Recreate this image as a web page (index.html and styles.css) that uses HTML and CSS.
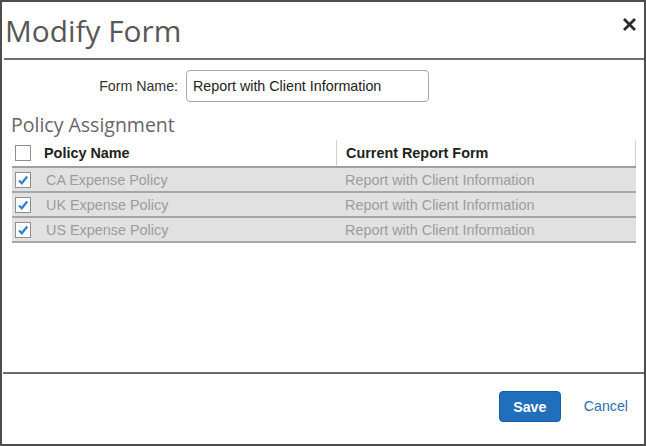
FILE: index.html
```html
<!DOCTYPE html>
<html>
<head>
<meta charset="utf-8">
<link rel="stylesheet" href="styles.css">
</head>
<body>
<div class="dialog">
  <header class="dlg-head">
    <h1 class="dlg-title">Modify Form</h1>
    <button class="close" aria-label="Close">
      <svg width="13" height="13" viewBox="0 0 13 13"><path d="M2 2 L11 11 M11 2 L2 11" stroke="#2b2b2b" stroke-width="2.8" stroke-linecap="square"/></svg>
    </button>
  </header>
  <div class="dlg-body">
    <div class="form-row">
      <label class="form-label">Form Name:</label>
      <input class="form-input" type="text" value="Report with Client Information">
    </div>
    <h2 class="section-title">Policy Assignment</h2>
    <div class="ptable">
      <div class="prow phead">
        <div class="pcell pc1"><span class="cbox"></span><span>Policy Name</span></div>
        <div class="pcell pc2">Current Report Form</div>
      </div>
      <div class="prow">
        <div class="pcell pc1"><span class="cbox checked"><svg width="12" height="12" viewBox="0 0 12 12"><path d="M2 6.5 L4.8 9.3 L10.2 2.5" fill="none" stroke="#2f7fd8" stroke-width="2.2"/></svg></span><span>CA Expense Policy</span></div>
        <div class="pcell pc2">Report with Client Information</div>
      </div>
      <div class="prow">
        <div class="pcell pc1"><span class="cbox checked"><svg width="12" height="12" viewBox="0 0 12 12"><path d="M2 6.5 L4.8 9.3 L10.2 2.5" fill="none" stroke="#2f7fd8" stroke-width="2.2"/></svg></span><span>UK Expense Policy</span></div>
        <div class="pcell pc2">Report with Client Information</div>
      </div>
      <div class="prow">
        <div class="pcell pc1"><span class="cbox checked"><svg width="12" height="12" viewBox="0 0 12 12"><path d="M2 6.5 L4.8 9.3 L10.2 2.5" fill="none" stroke="#2f7fd8" stroke-width="2.2"/></svg></span><span>US Expense Policy</span></div>
        <div class="pcell pc2">Report with Client Information</div>
      </div>
    </div>
  </div>
  <footer class="dlg-foot">
    <button class="btn-save">Save</button>
    <a class="btn-cancel" href="#">Cancel</a>
  </footer>
</div>
</body>
</html>
```
FILE: styles.css
```css
* { box-sizing: border-box; }
html, body { margin: 0; padding: 0; background: #fff; }
body { font-family: "Liberation Sans", Arial, sans-serif; }

.dialog {
  width: 646px;
  height: 446px;
  border: 2px solid #4d4d4d;
  display: flex;
  flex-direction: column;
  background: #fff;
}

.dlg-head {
  height: 58px;
  margin-left: 2px;
  border-bottom: 2px solid #6f6f6f;
  display: flex;
  justify-content: space-between;
  align-items: flex-start;
  flex-shrink: 0;
}
.dlg-title {
  margin: 0;
  padding: 11px 0 0 1px;
  font-family: "Open Sans", sans-serif;
  font-weight: 400;
  font-size: 29.8px;
  line-height: 36px;
  color: #575757;
}
.close {
  margin: 16px 8px 0 0;
  padding: 0;
  border: 0;
  background: none;
  width: 13px;
  height: 13px;
  display: flex;
}

.dlg-body {
  flex: 1;
  padding: 0 8px 0 10px;
}

.form-row {
  margin-top: 10px;
  display: flex;
  align-items: center;
}
.form-label {
  width: 166px;
  text-align: right;
  font-size: 14.2px;
  color: #333;
  margin-right: 8px;
}
.form-input {
  width: 243px;
  height: 32px;
  border: 1px solid #a8a8a8;
  border-radius: 4px;
  padding: 0 6px;
  font-family: "Liberation Sans", Arial, sans-serif;
  font-size: 14.3px;
  color: #222;
  margin: 0;
}

.section-title {
  margin: 11px 0 2px -1px;
  font-family: "Open Sans", sans-serif;
  font-weight: 400;
  font-size: 19.5px;
  line-height: 24px;
  color: #666;
}

.ptable { width: 100%; }
.prow {
  display: grid;
  grid-template-columns: 324px 1fr;
  height: 25px;
  border-bottom: 2px solid #a6a6a6;
  background: #e1e1e1;
  color: #9c9c9c;
  font-size: 14.4px;
}
.prow.phead {
  height: 29px;
  background: #fff;
  color: #222;
  font-weight: 700;
  border-bottom: 2px solid #a0a0a0;
}
.pcell {
  display: flex;
  align-items: center;
}
.pc1 { padding-left: 3px; gap: 15px; }
.phead .pc1 { gap: 13px; padding-top: 1px; }
.pc2 { padding-left: 9px; }
.phead .pc2 {
  border-left: 1px solid #d2d2d2;
  border-right: 1px solid #d2d2d2;
  margin: 1px 0 0 0;
}

.cbox {
  width: 16px;
  height: 16px;
  border: 1px solid #8e8e8e;
  background: #fff;
  display: flex;
  align-items: center;
  justify-content: center;
  flex-shrink: 0;
}

.dlg-foot {
  height: 72px;
  margin-left: 1px;
  border-top: 2px solid #6a6a6a;
  display: flex;
  justify-content: flex-end;
  align-items: flex-start;
  padding: 17px 16px 0 0;
  flex-shrink: 0;
}
.btn-save {
  width: 62px;
  height: 31px;
  background: #1f6fbd;
  border: 1px solid #1a5ea3;
  border-radius: 4px;
  color: #fff;
  font-family: "Liberation Sans", Arial, sans-serif;
  font-weight: 700;
  font-size: 14.2px;
  padding: 0;
  margin-right: 23px;
}
.btn-cancel {
  font-size: 14.2px;
  color: #2f6db5;
  text-decoration: none;
  line-height: 31px;
}
```
